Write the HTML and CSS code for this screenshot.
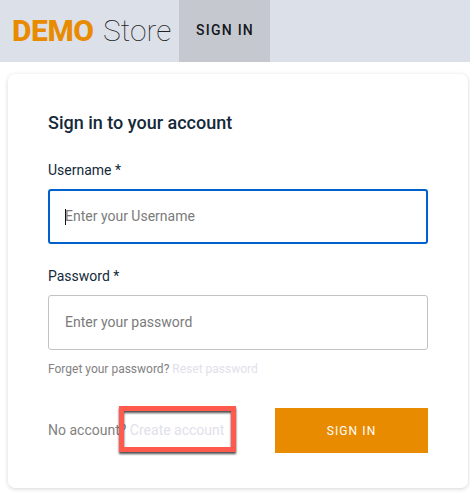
FILE: index.html
```html
<!DOCTYPE html>
<html lang="en">
<head>
<meta charset="utf-8">
<title>Demo Store</title>
<link rel="stylesheet" href="styles.css">
</head>
<body>
<header class="header">
  <div class="brand"><span class="brand-demo">DEMO</span><span class="brand-store">Store</span></div>
  <nav class="nav-item">SIGN IN</nav>
</header>
<main class="card">
  <h1 class="title">Sign in to your account</h1>
  <div class="label"><span>Username *</span></div>
  <div class="field focused"><span class="caret"></span><span class="placeholder">Enter your Username</span></div>
  <div class="label second"><span>Password *</span></div>
  <div class="field"><span class="placeholder">Enter your password</span></div>
  <p class="forgot"><span class="ask">Forget your password?</span><a class="link">Reset password</a></p>
  <div class="actions">
    <p class="register"><span class="ask">No account?</span><a class="link">Create account</a><span class="callout"></span></p>
    <button class="submit">SIGN IN</button>
  </div>
</main>
</body>
</html>
```

FILE: styles.css
```css
* { box-sizing: border-box; }
body {
  margin: 0;
  height: 496px;
  background: #fff;
  font-family: Roboto, "Liberation Sans", sans-serif;
  overflow: hidden;
}
.header {
  display: flex;
  height: 62px;
  background: #dce0e9;
}
.brand {
  display: flex;
  width: 179px;
  padding-left: 12px;
  font-size: 30px;
  line-height: 62px;
  white-space: nowrap;
}
.brand-demo {
  width: 91px;
  font-weight: 800;
  letter-spacing: -.4px;
  color: #e98b00;
}
.brand-store { font-weight: 100; color: #222; }
.nav-item {
  width: 91px;
  padding-left: 17px;
  background: #c6c8d0;
  color: #14181b;
  font-size: 14px;
  font-weight: 500;
  letter-spacing: 1.25px;
  line-height: 61px;
  white-space: nowrap;
}
.card {
  width: 460px;
  height: 414px;
  margin: 12px 0 0 8px;
  padding: 38px 40px 0;
  border-radius: 7px;
  background: #fff;
  box-shadow: 0 1px 4px rgba(0, 0, 0, .17);
}
.title {
  margin: 0;
  color: #14293a;
  font-size: 18px;
  font-weight: 500;
  line-height: 22px;
}
.label {
  height: 20px;
  margin-top: 26px;
  color: #14293a;
  font-size: 14px;
  line-height: 20px;
}
.label.second { margin-top: 22px; }
.field {
  display: flex;
  align-items: center;
  position: relative;
  height: 55px;
  margin-top: 9px;
  padding: 0 0 1px 16px;
  border: 1px solid #c2c2c2;
  border-radius: 3px;
  color: #7b7b7b;
  font-size: 14px;
}
.field.focused { padding-left: 15px; border: 2px solid #0061cc; }
.caret {
  position: absolute;
  left: 15px;
  top: 18px;
  width: 1px;
  height: 16px;
  background: #111;
}
.forgot {
  display: flex;
  gap: 3px;
  margin: 11px 0 0;
  font-size: 12px;
  line-height: 16px;
}
.ask { color: #828282; }
.link { color: #dfe1ea; }
.actions {
  display: flex;
  justify-content: space-between;
  margin-top: 31px;
}
.register {
  display: flex;
  gap: 3.5px;
  position: relative;
  margin: 0;
  font-size: 14px;
  line-height: 45px;
  white-space: nowrap;
}
.callout {
  position: absolute;
  left: 71px;
  top: -2px;
  width: 117px;
  height: 46px;
  border: 5px solid #ff5a4d;
  filter: drop-shadow(0 2px 1px rgba(0, 0, 0, .7));
}
.submit {
  width: 153px;
  height: 45px;
  padding: 0;
  border: 0;
  background: #e98b00;
  color: #fff;
  font-family: inherit;
  font-size: 12px;
  letter-spacing: 1.1px;
}
```
